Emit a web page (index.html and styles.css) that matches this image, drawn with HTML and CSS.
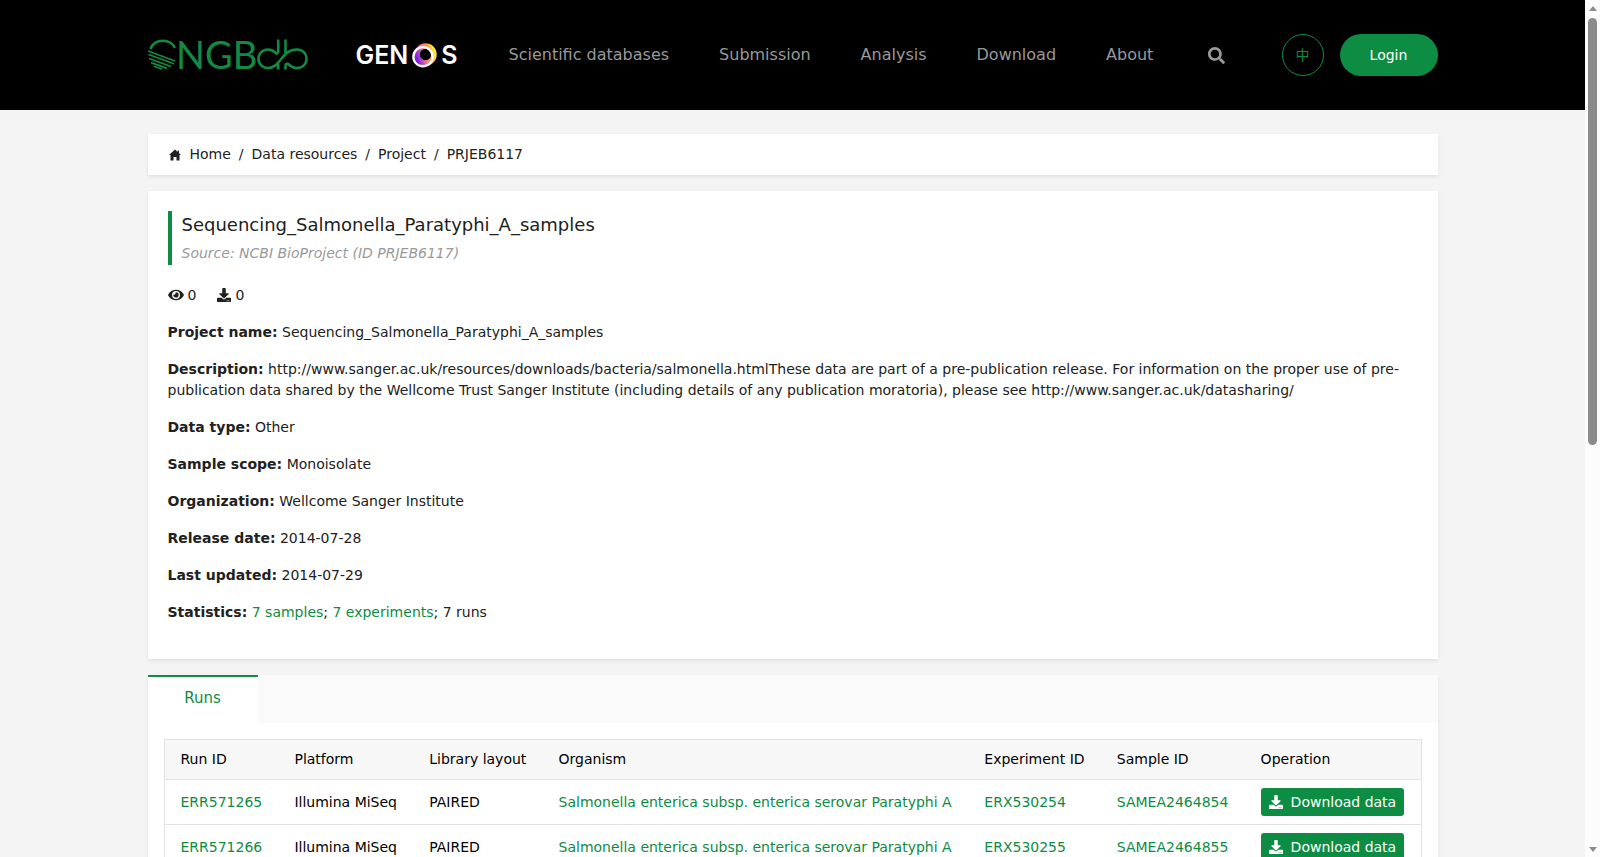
FILE: index.html
```
<!DOCTYPE html>
<html lang="en">
<head>
  <meta charset="UTF-8" />
  <meta name="viewport" content="width=device-width, initial-scale=1.0" />
  <title>PRJEB6117 - CNGBdb</title>
  <link rel="stylesheet" href="styles.css">
</head>
<body>
  <!-- shared icons -->
  <svg class="sprite" width="0" height="0">
    <symbol id="download" viewBox="0 0 512 512">
      <path d="M216 0h80c13.300 0 24 10.700 24 24v168h87.700c17.800 0 26.700 21.500 14.100 34.100L269.700 378.300c-7.500 7.500-19.800 7.500-27.300 0L90.100 226.100c-12.600-12.600-3.700-34.100 14.100-34.100H192V24c0-13.300 10.700-24 24-24zm296 376v112c0 13.300-10.700 24-24 24H24c-13.300 0-24-10.700-24-24V376c0-13.300 10.700-24 24-24h146.700l49 49c20.100 20.100 52.500 20.100 72.600 0l49-49H488c13.300 0 24 10.700 24 24zm-124 88c0-11-9-20-20-20s-20 9-20 20 9 20 20 20 20-9 20-20zm64 0c0-11-9-20-20-20s-20 9-20 20 9 20 20 20 20-9 20-20z"/>
    </symbol>
  </svg>

  <div class="page">
    <header>
      <div class="container nav-bar">
        <a href="#" class="logo" aria-label="CNGBdb">
          <svg width="160" height="32" viewBox="0 0 160 32" fill="none" stroke="#138a43" stroke-width="2.600">
            <!-- globe -->
            <path d="M2.500 10C4.500 4.500 9 1.800 15 1.800c5 0 9.500 2.500 12 7"/>
            <path stroke-width="1.700" d="M0 12l27 10M.5 15.500l25.500 9.200M1 19.500l22 8M3 23.600l16 5.800M6 27.200l8 3"/>
            <text x="28" y="30" class="logo-text">NGB</text>
            <!-- infinity loop -->
            <path d="M130.200.5v11.500c0 2.500-1.500 3-3 1.500-2-2-4.500-3-7.200-3-5.500 0-9.500 4-9.500 9.300s4 9.200 9.500 9.200c13 0 13-18.500 29-18.500 5.500 0 9.500 4 9.500 9.300s-4 9.200-9.500 9.200c-3 0-5.500-1-7.500-3-2-1.800-4-1.500-4 1v3.500M137.500.5V14M130.200 30.500v-6"/>
          </svg>
        </a>
        <a href="#" class="genos" aria-label="GENOS">
          <span>GEN</span>
          <svg width="25" height="25" viewBox="0 0 25 25" fill="none">
            <defs>
              <linearGradient id="ring" x1="0" y1="0.700" x2="1" y2="0.400">
                <stop offset="0" stop-color="#8a1cf0"/>
                <stop offset="0.450" stop-color="#f07c8c"/>
                <stop offset="0.750" stop-color="#ff9a3c"/>
                <stop offset="1" stop-color="#ffe63c"/>
              </linearGradient>
            </defs>
            <circle cx="13.500" cy="11.500" r="8.500" stroke="url(#ring)" stroke-width="5.500"/>
            <circle cx="11" cy="13.700" r="9.600" stroke="#fff" stroke-width="2.400"/>
          </svg>
          <span>S</span>
        </a>
        <nav>
          <a href="#">Scientific databases</a>
          <a href="#">Submission</a>
          <a href="#">Analysis</a>
          <a href="#">Download</a>
          <a href="#">About</a>
        </nav>
        <button class="search" aria-label="Search">
          <svg width="17" height="17" viewBox="0 0 512 512" fill="currentColor"><path d="M505 442.700L405.300 343c-4.500-4.500-10.600-7-17-7H372c27.600-35.300 44-79.700 44-128C416 93.100 322.900 0 208 0S0 93.100 0 208s93.100 208 208 208c48.300 0 92.700-16.400 128-44v16.300c0 6.400 2.500 12.500 7 17l99.700 99.700c9.400 9.400 24.600 9.400 33.900 0l28.300-28.300c9.400-9.400 9.400-24.600.1-34zM208 336c-70.700 0-128-57.200-128-128 0-70.700 57.200-128 128-128 70.700 0 128 57.200 128 128 0 70.700-57.200 128-128 128z"/></svg>
        </button>
        <button class="lang">中</button>
        <button class="login">Login</button>
      </div>
    </header>

    <main class="container">
      <div class="card breadcrumb">
        <svg width="12" height="12" viewBox="0 0 12 12" fill="currentColor"><path d="M6 0.500L0 6h1.500v5.500h3V8h3v3.500h3V6H12L10 4.200V1.500H8.600v1.400z"/></svg>
        <a href="#">Home</a><span>/</span><a href="#">Data resources</a><span>/</span><a href="#">Project</a><span>/</span><a href="#">PRJEB6117</a>
      </div>

      <div class="card project">
        <div class="title">
          <h1>Sequencing_Salmonella_Paratyphi_A_samples</h1>
          <p>Source: NCBI BioProject (ID PRJEB6117)</p>
        </div>
        <div class="counts">
          <span><svg width="16" height="14" viewBox="0 0 576 512" fill="currentColor"><path d="M572.500 241.400C518.300 135.600 410.900 64 288 64S57.700 135.600 3.500 241.400a32.400 32.400 0 0 0 0 29.200C57.700 376.400 165.100 448 288 448s230.300-71.600 284.500-177.400a32.400 32.400 0 0 0 0-29.200zM288 400a144 144 0 1 1 144-144 143.900 143.900 0 0 1-144 144zm0-240a95.300 95.300 0 0 0-25.300 3.800 47.900 47.900 0 0 1-66.900 66.900A95.800 95.800 0 1 0 288 160z"/></svg>0</span>
          <span><svg width="14" height="14" fill="currentColor"><use href="#download"/></svg>0</span>
        </div>
        <p><strong>Project name:</strong> Sequencing_Salmonella_Paratyphi_A_samples</p>
        <p><strong>Description:</strong> http://www.sanger.ac.uk/resources/downloads/bacteria/salmonella.htmlThese data are part of a pre-publication release. For information on the proper use of pre-publication data shared by the Wellcome Trust Sanger Institute (including details of any publication moratoria), please see http://www.sanger.ac.uk/datasharing/</p>
        <p><strong>Data type:</strong> Other</p>
        <p><strong>Sample scope:</strong> Monoisolate</p>
        <p><strong>Organization:</strong> Wellcome Sanger Institute</p>
        <p><strong>Release date:</strong> 2014-07-28</p>
        <p><strong>Last updated:</strong> 2014-07-29</p>
        <p><strong>Statistics:</strong> <a href="#">7 samples</a>; <a href="#">7 experiments</a>; 7 runs</p>
      </div>

      <div class="card">
        <div class="tabs"><button class="active">Runs</button></div>
        <div class="runs">
          <table>
            <thead>
              <tr><th>Run ID</th><th>Platform</th><th>Library layout</th><th>Organism</th><th>Experiment ID</th><th>Sample ID</th><th>Operation</th></tr>
            </thead>
            <tbody>
              <tr>
                <td><a href="#">ERR571265</a></td><td>Illumina MiSeq</td><td>PAIRED</td>
                <td><a href="#">Salmonella enterica subsp. enterica serovar Paratyphi A</a></td>
                <td><a href="#">ERX530254</a></td><td><a href="#">SAMEA2464854</a></td>
                <td><button class="download"><svg width="14" height="14" fill="currentColor"><use href="#download"/></svg>Download data</button></td>
              </tr>
              <tr>
                <td><a href="#">ERR571266</a></td><td>Illumina MiSeq</td><td>PAIRED</td>
                <td><a href="#">Salmonella enterica subsp. enterica serovar Paratyphi A</a></td>
                <td><a href="#">ERX530255</a></td><td><a href="#">SAMEA2464855</a></td>
                <td><button class="download"><svg width="14" height="14" fill="currentColor"><use href="#download"/></svg>Download data</button></td>
              </tr>
            </tbody>
          </table>
        </div>
      </div>
    </main>
  </div>

  <div class="scrollbar">
    <i class="arrow up"></i>
    <div class="track"><div class="thumb"></div></div>
    <i class="arrow down"></i>
  </div>
</body>
</html>
```
FILE: styles.css
```
* {
  box-sizing: border-box;
  margin: 0;
  padding: 0;
}

body {
  display: flex;
  height: 100vh;
  overflow: hidden;
  background: #f4f4f4;
  color: #212121;
  font-family: "DejaVu Sans", "Noto Sans CJK SC", sans-serif;
  font-size: 14px;
  line-height: 21px;
}

a {
  color: #0d8c43;
  text-decoration: none;
}

button {
  border: 0;
  background: none;
  font: inherit;
  cursor: pointer;
}

svg {
  display: block;
}

.sprite {
  position: absolute;
}

.page {
  flex: 1;
  min-width: 0;
  overflow: hidden;
}

.container {
  max-width: 1290px;
  margin: 0 auto;
}

/* header */
header {
  background: #000;
}

.nav-bar {
  display: flex;
  align-items: center;
  height: 110px;
}

.logo svg {
  overflow: visible;
}

.logo-text {
  fill: #138a43;
  stroke: none;
  font-family: Lato, sans-serif;
  font-size: 38px;
}

.genos {
  display: flex;
  align-items: center;
  justify-content: space-between;
  width: 102px;
  margin: 0 51px 0 48px;
  color: #fff;
  font-family: Inter, sans-serif;
  font-size: 25px;
  font-weight: 600;
}

nav {
  display: flex;
  gap: 50px;
  padding-bottom: 2px;
}

nav a {
  color: #999;
  font-size: 16px;
}

.search {
  margin-left: 55px;
  color: #999;
}

.lang {
  width: 42px;
  height: 42px;
  margin-left: auto;
  border: 1px solid #0d8c43;
  border-radius: 50%;
  color: #0d8c43;
}

.login {
  width: 98px;
  height: 42px;
  margin-left: 16px;
  border-radius: 21px;
  background: #0d8c43;
  color: #fff;
}

/* cards */
main {
  padding-top: 24px;
}

.card {
  margin-bottom: 16px;
  background: #fff;
  box-shadow: 0 2px 4px rgba(0, 0, 0, 0.08);
}

.breadcrumb {
  display: flex;
  align-items: center;
  padding: 10px 20px;
}

.breadcrumb svg {
  margin: 0 9px 0 1px;
}

.breadcrumb a {
  color: #212121;
}

.breadcrumb span {
  margin: 0 8px;
}

.project {
  padding: 20px;
}

.project > p {
  margin-bottom: 16px;
}

.title {
  margin-bottom: 20px;
  padding: 0 0 1px 10px;
  border-left: 4px solid #0d8c43;
}

.title h1 {
  margin-bottom: 5px;
  font-size: 18px;
  font-weight: normal;
  line-height: 27px;
}

.title p {
  color: #999;
  font-style: italic;
}

.counts {
  display: flex;
  gap: 21px;
  margin-bottom: 16px;
}

.counts span {
  display: flex;
  align-items: center;
  gap: 4px;
}

.counts svg {
  margin-bottom: 1px;
}

/* runs */
.tabs {
  display: flex;
  background: #fafafa;
}

.tabs .active {
  width: 110px;
  height: 48px;
  padding-bottom: 4px;
  border-top: 2px solid #0d8c43;
  background: #fff;
  color: #0d8c43;
  font-size: 15px;
}

.runs {
  padding: 16px;
}

table {
  width: 100%;
  border: 1px solid #e2e2e2;
  border-collapse: collapse;
  color: #000;
  text-align: left;
  white-space: nowrap;
}

th {
  height: 40px;
  padding: 0 16px;
  background: #f7f7f7;
  font-weight: normal;
}

td {
  height: 45px;
  padding: 0 16px;
  border-top: 1px solid #e2e2e2;
}

.download {
  display: flex;
  align-items: center;
  gap: 8px;
  height: 28px;
  padding: 0 8px;
  border-radius: 3px;
  background: #0d8c43;
  color: #fff;
}

/* scrollbar */
.scrollbar {
  display: flex;
  flex-direction: column;
  align-items: center;
  justify-content: space-between;
  width: 15px;
  padding: 6px 0 5px;
  background: #fcfcfc;
}

.track {
  flex: 1;
  width: 9px;
  padding: 7px 0;
}

.thumb {
  height: 52%;
  border-radius: 5px;
  background: #8b8b8b;
}

.arrow {
  border: 4px solid transparent;
}

.up {
  border-top: 0;
  border-bottom: 5px solid #8b8b8b;
}

.down {
  border-bottom: 0;
  border-top: 5px solid #8b8b8b;
}
```
